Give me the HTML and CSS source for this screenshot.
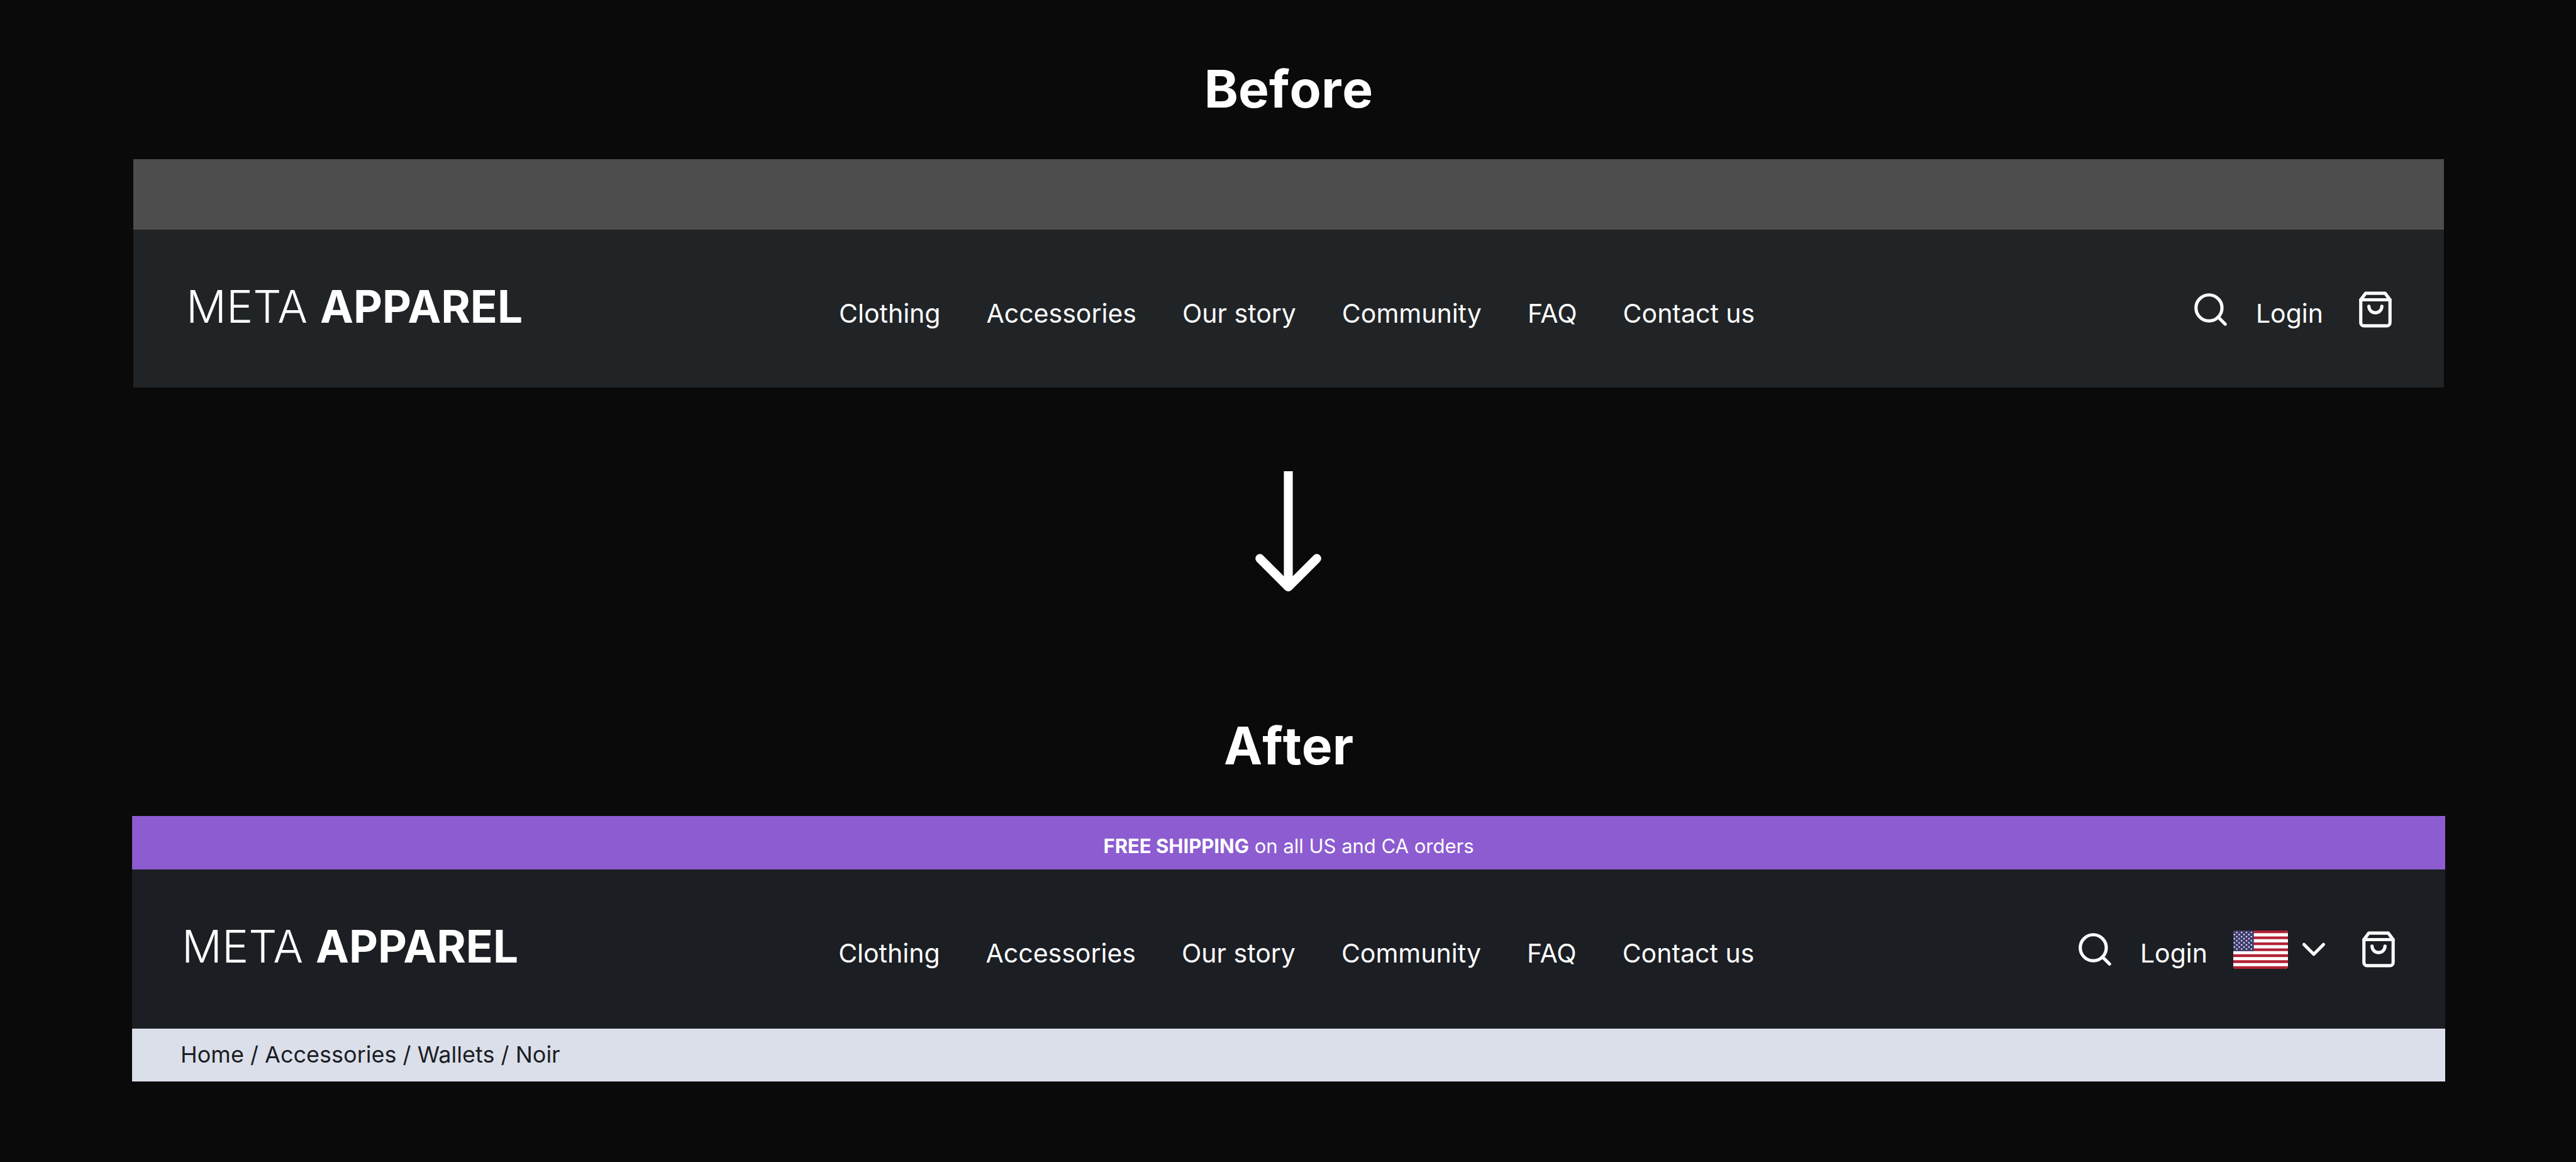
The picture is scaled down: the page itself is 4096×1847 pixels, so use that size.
FILE: index.html
```html
<!DOCTYPE html>
<html lang="en">
<head>
<meta charset="utf-8">
<title>Meta Apparel header: before and after</title>
<link rel="stylesheet" href="styles.css">
</head>
<body>
<svg class="symbols" aria-hidden="true">
  <symbol id="icon-search" viewBox="0 0 24 24"><circle cx="11" cy="11" r="8"/><path d="M21 21l-4.35-4.35"/></symbol>
  <symbol id="icon-bag" viewBox="0 0 24 24"><path d="M6 2L3 6v14a2 2 0 0 0 2 2h14a2 2 0 0 0 2-2V6l-3-4z"/><path d="M3 6h18"/><path d="M16 10a4 4 0 0 1-8 0"/></symbol>
  <symbol id="icon-chevron" viewBox="0 0 24 24"><path d="M6 9l6 6 6-6"/></symbol>
</svg>
<main class="board">
  <section class="example example-before">
    <h2 class="title">Before</h2>
    <div class="site">
      <div class="strip"></div>
      <header class="header">
        <a class="logo" href="#">META <b>APPAREL</b></a>
        <nav class="nav">
          <a href="#">Clothing</a>
          <a href="#">Accessories</a>
          <a href="#">Our story</a>
          <a href="#">Community</a>
          <a href="#">FAQ</a>
          <a href="#">Contact us</a>
        </nav>
        <div class="tools">
          <button class="tool" type="button" aria-label="Search"><svg class="icon"><use href="#icon-search"/></svg></button>
          <a class="login" href="#">Login</a>
          <button class="tool" type="button" aria-label="Bag"><svg class="icon"><use href="#icon-bag"/></svg></button>
        </div>
      </header>
    </div>
  </section>

  <svg class="arrow" viewBox="0 0 148 270" aria-hidden="true"><path d="M74 0V258"/><path class="arrow-head" d="M10 196L74 260L138 196"/></svg>

  <section class="example example-after">
    <h2 class="title">After</h2>
    <div class="site">
      <p class="promo"><b>FREE SHIPPING</b> on all US and CA orders</p>
      <header class="header">
        <a class="logo" href="#">META <b>APPAREL</b></a>
        <nav class="nav">
          <a href="#">Clothing</a>
          <a href="#">Accessories</a>
          <a href="#">Our story</a>
          <a href="#">Community</a>
          <a href="#">FAQ</a>
          <a href="#">Contact us</a>
        </nav>
        <div class="tools">
          <button class="tool" type="button" aria-label="Search"><svg class="icon"><use href="#icon-search"/></svg></button>
          <a class="login" href="#">Login</a>
          <button class="region" type="button" aria-label="Region: United States">
            <svg class="flag" viewBox="0 0 123 86">
              <defs>
                <clipPath id="flag-shape"><rect width="123" height="86" rx="6"/></clipPath>
                <pattern id="stars" x="-2.9" y="-5" width="10.9" height="9.33" patternUnits="userSpaceOnUse">
                  <circle cx="5.45" cy="4.67" r="1.7"/><circle cx="0" cy="0" r="1.7"/><circle cx="10.9" cy="0" r="1.7"/><circle cx="0" cy="9.33" r="1.7"/><circle cx="10.9" cy="9.33" r="1.7"/>
                </pattern>
              </defs>
              <g clip-path="url(#flag-shape)">
                <rect width="123" height="86" fill="#fff"/>
                <path d="M0 2.8H123M0 16.3H123M0 29.7H123M0 43.1H123M0 56.5H123M0 69.8H123M0 83.2H123" stroke="#b22234" stroke-width="6.2"/>
                <rect width="46.3" height="46.3" fill="#3c3b6e"/>
                <rect y="2" width="44" height="42" fill="url(#stars)"/>
              </g>
            </svg>
            <svg class="icon"><use href="#icon-chevron"/></svg>
          </button>
          <button class="tool" type="button" aria-label="Bag"><svg class="icon"><use href="#icon-bag"/></svg></button>
        </div>
      </header>
      <nav class="crumbs" aria-label="Breadcrumb"><a href="#">Home</a> / <a href="#">Accessories</a> / <a href="#">Wallets</a> / <a href="#">Noir</a></nav>
    </div>
  </section>
</main>
</body>
</html>
```
FILE: styles.css
```css
* {
  box-sizing: border-box;
}

body {
  margin: 0;
  background: #0a0a0a;
  color: #fff;
  font-family: Inter, "Liberation Sans", sans-serif;
}

a {
  color: inherit;
  text-decoration: none;
}

button {
  display: flex;
  align-items: center;
  padding: 0;
  border: 0;
  background: none;
  color: inherit;
}

.symbols {
  display: block;
  width: 0;
  height: 0;
}

.board {
  display: flex;
  flex-direction: column;
  align-items: center;
  min-height: 100vh;
  padding-top: 92px;
}

.example {
  width: 100%;
}

.example-before {
  padding: 0 210px 0 212px;
}

.example-after {
  padding: 0 208px 0 210px;
}

.title {
  margin: 0 0 61px;
  font-size: 82px;
  font-weight: 700;
  font-kerning: none;
  font-variant-ligatures: none;
  line-height: 100px;
  text-align: center;
}

.strip {
  height: 112px;
  background: #4d4d4d;
}

.header {
  display: grid;
  grid-template-columns: 51fr auto 50fr;
  align-items: baseline;
  padding: 86px 78px 0 84px;
  height: 251px;
  background: #202427;
}

.logo {
  font-size: 71px;
  font-weight: 300;
  line-height: 72px;
}

.logo b {
  font-weight: 700;
}

.nav {
  display: flex;
  gap: 73px;
  font-size: 41px;
  line-height: 52px;
}

.tools {
  display: flex;
  align-items: center;
  justify-content: flex-end;
  gap: 41px;
}

.login {
  align-self: baseline;
  padding-top: 12px;
  font-size: 41px;
  line-height: 52px;
}

.example-before .login {
  margin-right: 11px;
}

.icon {
  display: block;
  width: 62px;
  height: 62px;
  fill: none;
  stroke: #fafafc;
  stroke-width: 2;
  stroke-linecap: round;
  stroke-linejoin: round;
}

.arrow {
  width: 105px;
  height: 191px;
  margin: 133px 0 196px;
  fill: none;
  stroke: #fff;
  stroke-width: 20;
}

.arrow-head {
  stroke-linecap: round;
  stroke-linejoin: round;
}

.promo {
  height: 85px;
  margin: 0;
  padding-top: 14px;
  background: #8c5cd0;
  font-size: 31px;
  line-height: 68px;
  text-align: center;
}

.example-after .header {
  height: 253px;
  padding: 86px 75px 0 79px;
  background: #1b1e23;
}

.region {
  gap: 10px;
}

.flag {
  display: block;
  width: 87px;
  height: 61px;
}

#stars circle {
  fill: #fff;
}

.crumbs {
  height: 84px;
  padding: 0 77px;
  background: #dbdfea;
  color: #1b1e23;
  font-size: 36px;
  line-height: 82px;
}
```
